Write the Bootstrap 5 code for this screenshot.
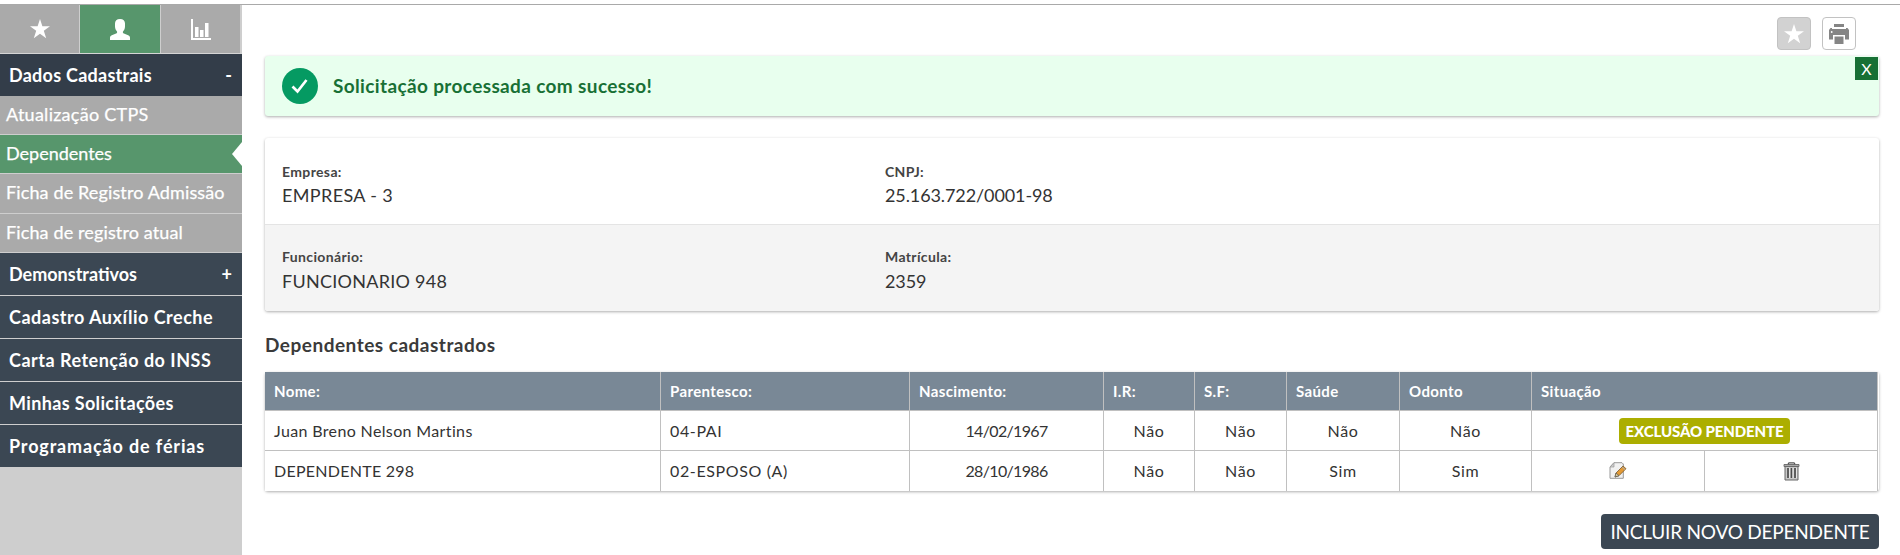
<!DOCTYPE html>
<html lang="pt-BR">
<head>
<meta charset="utf-8">
<title>Dependentes</title>
<link href="https://cdn.jsdelivr.net/npm/bootstrap@5.3.0/dist/css/bootstrap.min.css" rel="stylesheet">
<style>
body{font-family:Lato,"Open Sans",sans-serif;color:#333;height:555px;overflow:hidden;padding-top:4px;font-size:16px}
.shell{border-top:1px solid #a9a9a9;height:551px}
.side{width:242px;background:#cecece;flex:none}
.tabs{height:49px;border-bottom:1px solid #d5d5d5;background:#cecece}
.tabs a{background:#aaa;width:79px;margin-right:1px}
.tabs a.active{background:#57966c;width:80px}
.side-main,.side-sub{color:#fff;text-decoration:none;display:flex;align-items:center;white-space:nowrap;border-bottom:1px solid #cecece}
.side-main{height:43px;background:#3b4753;font-size:18px;font-weight:700;padding:0 10px 0 9px;justify-content:space-between}
.side-main.open{height:42px;background:#333d49;border-bottom:0}
.side-main:last-child{border-bottom:0;height:42px}
.side-sub{height:39px;background:#aaa;font-size:18px;padding:0 0 2px 6px;-webkit-text-stroke:.25px #fff}
.side-sub.tall{height:40px}
.side-sub.active{background:#57966c;position:relative}
.side-sub.active::after{content:"";position:absolute;right:0;top:7px;border:12px solid transparent;border-left:0;border-right:10px solid #fff}
.main{padding:12px 20px 0 22px}
.tools{height:34px;padding-right:24px;gap:11px}
.tools a{width:34px;height:33px;border:1px solid #c2c2c2;border-radius:4px}
.tools .off{background:#d2d2d2}
.panel{border-radius:3px;box-shadow:0 1px 3px rgba(0,0,0,.32);margin:0 1px}
.notice{height:60px;margin-top:5px;background:#e8ffee;color:#187035;font-size:19px;font-weight:700;padding-left:17px}
.notice svg{margin-right:15px}
.shut{top:1px;right:1px;width:23px;height:23px;background:#187035;color:#fff;font-size:16px;font-weight:400}
.info{margin-top:22px;font-size:18px;line-height:24px}
.info>div{height:86px;padding:24px 17px 0}
.info>div+div{height:87px;background:#f4f4f4;border-top:1px solid #e4e4e4;border-radius:0 0 3px 3px;padding-top:22px}
.info dl{width:603px;margin:0}
.info dt{font-size:14px;line-height:20px;color:#444;letter-spacing:.36px}
.info dd{margin:1px 0 0}
.info>div+div dd{margin-top:2px}
.info .num{letter-spacing:-.1px}
.title{font-size:19px;font-weight:700;line-height:24px;margin:22px 0 15px 1px;color:#3a3a3a;letter-spacing:.5px}
.grid{table-layout:fixed;width:1613px;border-collapse:separate;border-spacing:0;background:#fff}
.grid th{background:#798896;color:#fff;font-size:15px;letter-spacing:.37px;height:39px;padding:1px 0 0 9px;border-right:1px solid #c0c0c0;border-bottom:1px solid #c0c0c0}
.grid td{height:40px;padding:0 0 0 9px;border-right:1px solid #c0c0c0;border-bottom:1px solid #c0c0c0;white-space:nowrap}
.grid tr:last-child td{border-bottom:0}
.grid td.text-center{padding:0}
.grid td svg{margin-top:-3px}
.pending{display:inline-flex;height:26px;width:171px;background:#acae00;color:#fff;border-radius:4px;font-size:15px;font-weight:900;letter-spacing:-.12px;align-items:center;justify-content:center;vertical-align:middle}
.include{width:278px;height:35px;margin:23px 1px 0 0;background:#3b4753;color:#fff;border:0;border-radius:4px;font-size:19px;padding:0;letter-spacing:-.22px;white-space:nowrap;line-height:35px}
.l1{letter-spacing:.13px}.l2{letter-spacing:.26px}.l3{letter-spacing:.36px}.l5{letter-spacing:.5px}.l6{letter-spacing:.63px}.l8{letter-spacing:.86px}.date{letter-spacing:-.67px}
</style>
<script src="https://cdn.jsdelivr.net/npm/bootstrap@5.3.0/dist/js/bootstrap.bundle.min.js"></script>
</head>
<body>
<div class="shell d-flex">
<aside class="side">
<nav class="tabs d-flex">
<a href="#" class="d-flex align-items-center justify-content-center"><svg width="20" height="20" viewBox="0 0 20 20"><path fill="#fff" d="M10 0l2.4 7.2H20l-6.200 4.500 2.400 7.500L10 14.700 3.800 19.200l2.400-7.500L0 7.200h7.600z"/></svg></a>
<a href="#" class="active d-flex align-items-center justify-content-center"><svg width="20" height="21" viewBox="0 0 20 21"><path fill="#fff" d="M10 0c3.300 0 5 1.800 5 4.500v3C15 9.700 14 11.500 13 12.500c-.4.800 0 1.700.9 2.100l4.300 1.600c1.200.5 1.800 1.300 1.800 2.500V21H0v-2.300c0-1.200.6-2 1.800-2.500l4.300-1.600c.9-.4 1.300-1.300.9-2.100C6 11.500 5 9.700 5 7.500v-3C5 1.800 6.700 0 10 0z"/></svg></a>
<a href="#" class="d-flex align-items-center justify-content-center"><svg width="20" height="21" viewBox="0 0 20 21"><path fill="#fff" d="M0 0h2v19h18v2H0zM4 8h3.500v10H4zM9 11h3.500v7H9zM14 4h3.500v14H14z"/></svg></a>
</nav>
<a href="#" class="side-main open"><span class="l2">Dados Cadastrais</span><span>-</span></a>
<a href="#" class="side-sub"><span class="l2">Atualização CTPS</span></a>
<a href="#" class="side-sub active">Dependentes</a>
<a href="#" class="side-sub tall"><span class="l1">Ficha de Registro Admissão</span></a>
<a href="#" class="side-sub"><span class="l1">Ficha de registro atual</span></a>
<a href="#" class="side-main"><span>Demonstrativos</span><span>+</span></a>
<a href="#" class="side-main"><span class="l5">Cadastro Auxílio Creche</span></a>
<a href="#" class="side-main"><span class="l5">Carta Retenção do INSS</span></a>
<a href="#" class="side-main"><span class="l3">Minhas Solicitações</span></a>
<a href="#" class="side-main"><span class="l8">Programação de férias</span></a>
</aside>
<main class="main flex-grow-1">
<div class="tools d-flex justify-content-end">
<a href="#" class="off d-flex align-items-center justify-content-center"><svg width="20" height="20" viewBox="0 0 20 20"><path fill="#fff" d="M10 0l2.400 7.200H20l-6.200 4.500 2.400 7.500L10 14.700 3.800 19.200l2.400-7.500L0 7.200h7.600z"/></svg></a>
<a href="#" class="d-flex align-items-center justify-content-center"><svg width="20" height="20" viewBox="0 0 20 20" fill="#858585"><path d="M5 0h10v3H5zM1.500 4H3v1h14V4h1.500L20 6v9.500h-4V11H4v4.500H0V6z"/><path d="M5.500 12.500h9V20h-9z"/><circle cx="2.700" cy="8" r=".9" fill="#fff"/></svg></a>
</div>
<div class="notice panel d-flex align-items-center position-relative">
<svg width="36" height="36" viewBox="0 0 36 36"><circle cx="18" cy="18" r="18" fill="#059a62"/><path d="M10.500 18.500l5 5L24.500 12" fill="none" stroke="#fff" stroke-width="2.700"/></svg>
<span class="l3">Solicitação processada com sucesso!</span>
<a href="#" class="shut position-absolute d-flex align-items-center justify-content-center text-decoration-none">X</a>
</div>
<section class="info panel">
<div class="d-flex"><dl><dt>Empresa:</dt><dd class="l3">EMPRESA - 3</dd></dl><dl><dt>CNPJ:</dt><dd class="num">25.163.722/0001-98</dd></dl></div>
<div class="d-flex"><dl><dt>Funcionário:</dt><dd class="l2">FUNCIONARIO 948</dd></dl><dl><dt>Matrícula:</dt><dd class="num">2359</dd></dl></div>
</section>
<h2 class="title">Dependentes cadastrados</h2>
<div class="panel">
<table class="grid">
<colgroup><col style="width:396px"><col style="width:249px"><col style="width:194px"><col style="width:91px"><col style="width:92px"><col style="width:113px"><col style="width:132px"><col style="width:173px"><col style="width:173px"></colgroup>
<thead><tr><th>Nome:</th><th>Parentesco:</th><th>Nascimento:</th><th>I.R:</th><th>S.F:</th><th>Saúde</th><th>Odonto</th><th colspan="2">Situação</th></tr></thead>
<tbody>
<tr><td class="l3">Juan Breno Nelson Martins</td><td class="l6">04-PAI</td><td class="text-center date">14/02/1967</td><td class="text-center l6">Não</td><td class="text-center l6">Não</td><td class="text-center l6">Não</td><td class="text-center l6">Não</td><td colspan="2" class="text-center"><span class="pending">EXCLUSÃO PENDENTE</span></td></tr>
<tr><td class="l2">DEPENDENTE 298</td><td class="l6">02-ESPOSO (A)</td><td class="text-center date">28/10/1986</td><td class="text-center l6">Não</td><td class="text-center l6">Não</td><td class="text-center l6">Sim</td><td class="text-center l6">Sim</td>
<td class="text-center"><svg width="18" height="18" viewBox="0 0 18 18"><path d="M5 .7h8l1.300 1.300v14.300H1V5z" fill="#f1f1f1" stroke="#999"/><path d="M5 .7V5H1z" fill="#ccc" stroke="#999" stroke-width=".7"/><path d="M7 11l7-7 3 2.700-7 7-4 1.300z" fill="#e39a35" stroke="#79592c" stroke-width=".8"/><path d="M6 15l1-4 3 2.700z" fill="#ddd0a0" stroke="#555" stroke-width=".7"/><path d="M13 5l3 2.700" stroke="#aaa" stroke-width="1"/></svg></td>
<td class="text-center"><svg width="17" height="19" viewBox="0 0 17 19"><path d="M2 4.500h13v13.500H2z" fill="#c9c9c9" stroke="#666"/><path d="M5 6v10M8.500 6v10M12 6v10" stroke="#4c4c4c" stroke-width="1.700"/><path d="M6.500 6v10M10 6v10M13.500 6v10" stroke="#eee" stroke-width=".8"/><path d="M1 2.500h15v2H1z" fill="#aaa" stroke="#666" stroke-width=".9"/><path d="M5 2l1-1.200h5L12 2" fill="none" stroke="#555" stroke-width="1.200"/></svg></td></tr>
</tbody>
</table>
</div>
<div class="text-end"><button class="include btn">INCLUIR NOVO DEPENDENTE</button></div>
</main>
</div>
</body>
</html>
